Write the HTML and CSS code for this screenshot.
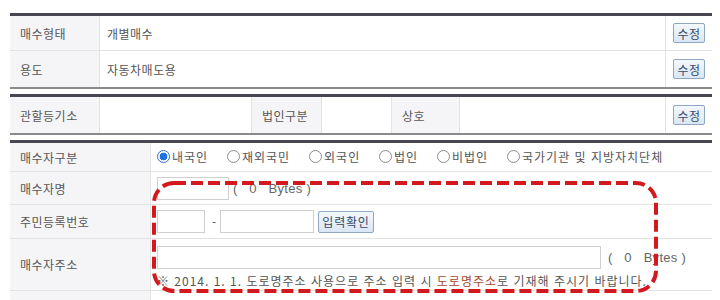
FILE: index.html
```html
<!DOCTYPE html>
<html lang="ko">
<head>
<meta charset="UTF-8">
<title>매수자 정보</title>
<link rel="stylesheet" href="styles.css">
</head>
<body>
<div class="wrap">
  <table class="tbl">
    <colgroup><col style="width:90px"><col><col style="width:46px"></colgroup>
    <tr class="r35">
      <th>매수형태</th>
      <td>개별매수</td>
      <td class="btn-cell"><button class="btn">수정</button></td>
    </tr>
    <tr class="r36 last">
      <th>용도</th>
      <td>자동차매도용</td>
      <td class="btn-cell"><button class="btn">수정</button></td>
    </tr>
  </table>

  <table class="tbl">
    <colgroup>
      <col style="width:90px"><col style="width:152px"><col style="width:70px"><col style="width:70px">
      <col style="width:68px"><col><col style="width:46px">
    </colgroup>
    <tr class="r36 last">
      <th>관할등기소</th>
      <td></td>
      <th>법인구분</th>
      <td></td>
      <th>상호</th>
      <td></td>
      <td class="btn-cell"><button class="btn">수정</button></td>
    </tr>
  </table>

  <div class="buyer">
    <table class="tbl tbl-buyer">
      <colgroup><col style="width:141px"><col></colgroup>
      <tr class="r29">
        <th>매수자구분</th>
        <td class="radios">
          <label class="opt"><span class="radio on"></span>내국인</label>
          <label class="opt"><span class="radio"></span>재외국민</label>
          <label class="opt"><span class="radio"></span>외국인</label>
          <label class="opt"><span class="radio"></span>법인</label>
          <label class="opt"><span class="radio"></span>비법인</label>
          <label class="opt"><span class="radio"></span>국가기관 및 지방자치단체</label>
        </td>
      </tr>
      <tr class="r33">
        <th>매수자명</th>
        <td>
          <span class="inp w72"></span>
          <span class="bytes">(&nbsp;&nbsp; 0 &nbsp;&nbsp;Bytes )</span>
        </td>
      </tr>
      <tr class="r34">
        <th>주민등록번호</th>
        <td>
          <span class="inp w48"></span>
          <span class="dash">-</span>
          <span class="inp w94"></span>
          <button class="btn btn-check">입력확인</button>
        </td>
      </tr>
      <tr class="r52">
        <th>매수자주소</th>
        <td class="addr">
          <div class="addr-line">
            <span class="inp w444"></span>
            <span class="bytes">(&nbsp;&nbsp; 0 &nbsp;&nbsp;Bytes )</span>
          </div>
          <p class="note">※ 2014. 1. 1. 도로명주소 사용으로 주소 입력 시 <em>도로명주소</em>로 기재해 주시기 바랍니다.</p>
        </td>
      </tr>
      <tr class="r9 last">
        <th></th>
        <td></td>
      </tr>
    </table>
    <svg class="mark" width="512" height="114" viewBox="0 0 512 114">
      <rect x="2" y="2" width="502" height="108" rx="20" ry="20" fill="none" stroke="#d21a1e" stroke-width="4" stroke-dasharray="12 5"/>
    </svg>
  </div>
</div>
</body>
</html>
```

FILE: styles.css
```css
* {
  margin: 0;
  padding: 0;
  box-sizing: border-box;
}

body {
  background: #fff;
  font-family: "Noto Sans CJK KR", "Noto Sans", sans-serif;
  font-size: 12px;
  color: #555;
}

.wrap {
  width: 702px;
  margin: 13px 0 0 10px;
}

.tbl {
  width: 100%;
  border-collapse: separate;
  border-spacing: 0;
  table-layout: fixed;
  border-top: 3px solid #474752;
  border-bottom: 2px solid #8a8a8a;
  margin-bottom: 5px;
}

.tbl th,
.tbl td {
  border-bottom: 1px solid #e3e3e3;
  border-right: 1px solid #e3e3e3;
  vertical-align: middle;
  white-space: nowrap;
}

.tbl tr.last th,
.tbl tr.last td {
  border-bottom: none;
}

.tbl th {
  background: #f5f5f7;
  font-weight: normal;
  text-align: left;
  padding-left: 10px;
  letter-spacing: 0.5px;
}

.tbl td {
  padding-left: 7px;
  letter-spacing: 0.5px;
}

.tbl td:last-child {
  border-right: none;
}

.tbl-buyer {
  border-bottom: none;
  margin-bottom: 0;
}

.tbl-buyer td {
  padding-left: 6px;
}

.r9 { height: 9px; }
.r29 { height: 29px; }
.r33 { height: 33px; }
.r34 { height: 34px; }
.r35 { height: 35px; }
.r36 { height: 36px; }
.r52 { height: 52px; }

.tbl td.btn-cell {
  padding: 0;
  text-align: center;
}

.btn {
  font-family: inherit;
  font-size: 12px;
  color: #3a4a66;
  background: linear-gradient(#f3f8fd, #d9e6f4);
  border: 1px solid #8fa6c4;
  border-radius: 2px;
  height: 20px;
  padding: 0 3px;
  line-height: 17px;
  letter-spacing: 0.5px;
}

.buyer {
  position: relative;
}

.opt {
  display: inline-flex;
  align-items: center;
  margin-right: 15px;
  letter-spacing: 1px;
}

.radio {
  display: inline-block;
  width: 13px;
  height: 13px;
  border: 1px solid #8d8d8d;
  border-radius: 50%;
  margin-right: 2px;
  background: #fff;
}

.radio.on {
  border-color: #2f6fd0;
  background: radial-gradient(circle, #1f74e0 0 3.6px, #fff 4.2px);
}

.inp {
  display: inline-block;
  height: 23px;
  border: 1px solid #cfcfcf;
  background: #fff;
  vertical-align: middle;
}

.w72 { width: 72px; }
.w48 { width: 48px; }
.w94 { width: 94px; }
.w444 { width: 444px; }

.bytes {
  display: inline-block;
  vertical-align: middle;
  font-family: "Liberation Sans", sans-serif;
  font-size: 13px;
  color: #666;
  letter-spacing: 0.3px;
}

.dash {
  display: inline-block;
  vertical-align: middle;
  margin-left: 3px;
}

.btn-check {
  vertical-align: middle;
  height: 22px;
  padding: 0 3px;
  letter-spacing: 0.8px;
}

.tbl-buyer td.addr {
  padding-top: 6px;
}

.addr-line {
  display: flex;
  align-items: center;
}

.addr-line .bytes {
  margin-left: 7px;
}

.note {
  margin-top: 4px;
  line-height: 16px;
  color: #555;
  letter-spacing: 1px;
}

.note em {
  font-style: normal;
  color: #a4492e;
}

.mark {
  position: absolute;
  left: 142px;
  top: 41px;
}
```
